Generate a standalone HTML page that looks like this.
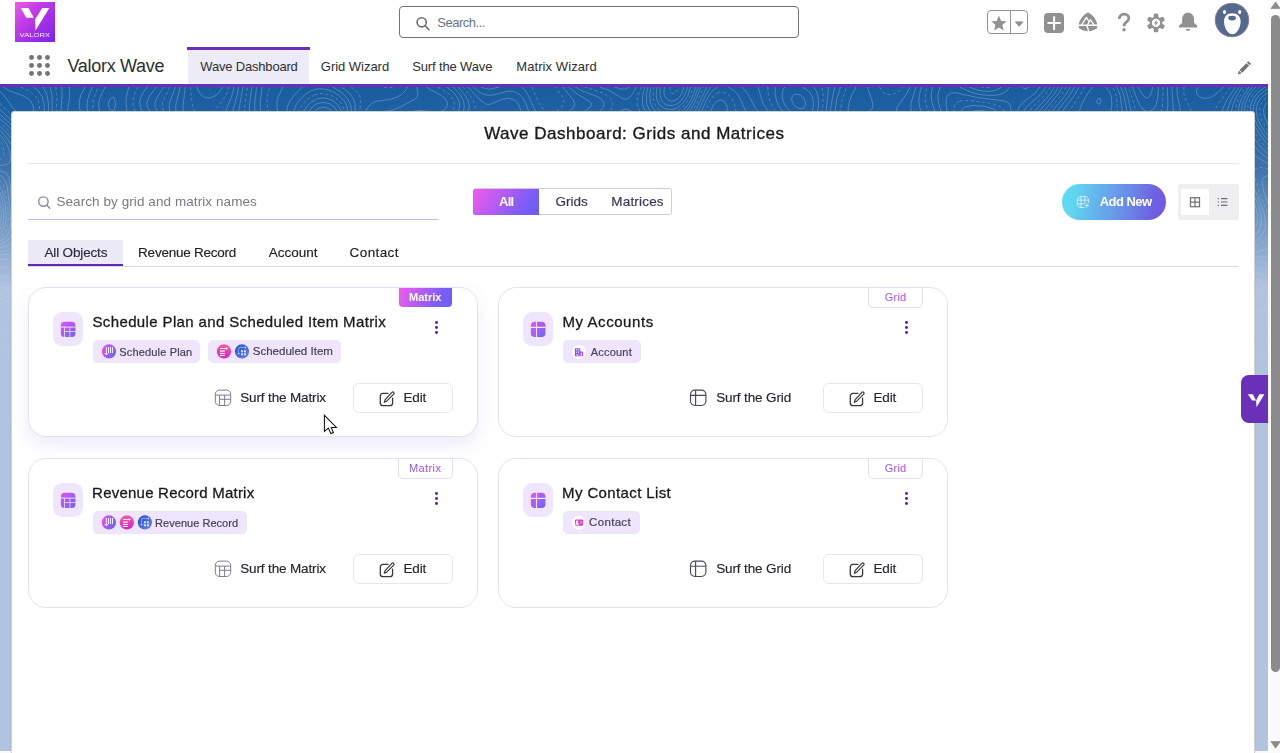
<!DOCTYPE html>
<html>
<head>
<meta charset="utf-8">
<title>Wave Dashboard</title>
<style>
*{box-sizing:border-box;margin:0;padding:0}
html,body{width:1280px;height:753px;overflow:hidden;background:#fff}
body{font-family:"Liberation Sans",sans-serif;color:#181818;position:relative}
.abs{position:absolute}
.t{position:absolute;white-space:nowrap;line-height:1}
/* page background */
#bg{left:0;top:87px;width:1268px;height:664.7px;background:#b0c4df;overflow:hidden}
#bg .grad{left:0;top:0;width:1268px;height:200px;background:linear-gradient(to bottom,#195d9e 0%,#1f62a3 14%,rgba(60,114,172,1) 40%,rgba(176,196,223,0) 100%)}
#bottomstrip{left:0;top:751px;width:1268px;height:2px;background:#fafafa}
/* header */
#hdr{left:0;top:0;width:1268px;height:84px;background:#fff}
#hdrline{left:0;top:84px;width:1268px;height:3px;background:#6a2fb9}
#logo{left:15px;top:2px;width:40px;height:40px;background:linear-gradient(135deg,#f05ce6 0%,#c23de6 35%,#9a2ce8 70%,#7a22e6 100%)}
#gsearch{left:399px;top:6px;width:400px;height:32px;border:1px solid #747474;border-radius:4px;background:#fff}
#fav{left:987px;top:10px;width:41px;height:24px;border:1px solid #939393;border-radius:4px}
#fav i{position:absolute;left:22px;top:0;width:1px;height:22px;background:#939393}
#plus{left:1044px;top:13px;width:20px;height:20px;border-radius:4px;background:#919191}
#avatar{left:1215px;top:3px;width:34px;height:34px;border-radius:50%;background:#54698d;overflow:hidden}
#navtab{left:187.8px;top:47px;width:121.4px;height:37px;background:#eeebf8}
#navtabtop{left:187px;top:47px;width:123px;height:3px;background:#6a2fb9}
/* scrollbar */
#sb{left:1268px;top:0;width:12px;height:753px;background:#fbfbfb}
#sbthumb{left:3px;top:15px;width:9.4px;height:656.5px;border-radius:4.7px;background:#8b8a8d}
/* main card */
#main{left:11.2px;top:110.8px;width:1244.2px;height:660px;background:#fff;border-radius:3px 3px 0 0;border:1px solid #d3d0cd;box-shadow:0 1px 2px rgba(0,0,0,.1)}
.hr1{left:28px;top:163px;width:1211px;height:1px;background:#e8e6f2}
#sline{left:28px;top:219px;width:410px;height:1px;background:#c9b9ef}
#tog{left:472.6px;top:188.4px;width:199px;height:27px;border:1px solid #cfcce2;border-radius:2.5px;background:#fff}
#togall{left:472.9px;top:189px;width:66px;height:26px;border-radius:2.5px 0 0 2.5px;background:linear-gradient(125deg,#f25bee 0%,#b45cf2 40%,#7a5ef5 75%,#6a5cf6 100%)}
#addnew{left:1062px;top:184px;width:104px;height:36px;border-radius:18px;background:linear-gradient(100deg,#5edcf0 0%,#5fd7ef 12%,#64b6ec 32%,#698ee7 60%,#6e62e2 86%,#7056e0 100%)}
#vt{left:1178px;top:184px;width:61px;height:36px;border-radius:3px;background:#efeff1}
#vtw{left:1181px;top:189px;width:28px;height:26px;background:#fff;border-radius:1px}
#otab{left:28px;top:240px;width:95px;height:26px;background:#eceaf7;border-bottom:2px solid #5b2ab8}
#oline{left:28px;top:266px;width:1211px;height:1px;background:#dcdce0}
/* cards */
.card{position:absolute;width:450px;height:150px;border:1px solid #e4e2ee;border-radius:18px;background:#fff}
.card.hov{box-shadow:0 8px 18px rgba(120,100,200,.13)}
.tile{position:absolute;left:24px;top:24px;width:30px;height:34px;border-radius:9px;background:#efe5fd}
.badge{position:absolute;left:369px;top:-1px;width:55px;height:20.8px;border-radius:0 0 5px 5px;border:1px solid #e2dff0;background:#fff}
.badge.fill{left:370px;top:0;width:53px;height:19px;border-radius:0 0 4px 4px;border:0;background:linear-gradient(115deg,#f25bee 0%,#b45cf2 40%,#7a5ef5 75%,#6a5ef7 100%)}
.kebab{position:absolute;left:406.1px;top:33.1px;width:3px;height:14px}
.kebab i{position:absolute;left:0;width:2.9px;height:2.9px;border-radius:50%;background:#5a1fb0}
.chip{position:absolute;top:52px;height:23px;border-radius:5px;background:#efe5fd;border:1px solid #ebe6f4}
.ebtn{position:absolute;left:324px;top:95px;width:100px;height:30px;border:1px solid #e7e6ed;border-radius:6px;background:#fff}
.ci{position:absolute;width:14px;height:14px;border-radius:50%}
#side{left:1241px;top:375px;width:27px;height:48px;border-radius:8px 0 0 8px;background:#6a31b8}
</style>
</head>
<body>
<div id="bg" class="abs"><div class="grad abs"></div><svg id="topo" class="abs" style="left:0;top:0" width="1268" height="300" viewBox="0 0 1268 300"><defs><linearGradient id="tfade" x1="0" y1="0" x2="0" y2="1"><stop offset="0" stop-color="#fff" stop-opacity="1"/><stop offset=".5" stop-color="#fff" stop-opacity=".8"/><stop offset="1" stop-color="#fff" stop-opacity="0"/></linearGradient><mask id="tmask"><rect width="1268" height="300" fill="url(#tfade)"/></mask></defs><g mask="url(#tmask)" fill="none" stroke="#d4e6f8" stroke-opacity=".36" stroke-width=".8" stroke-linejoin="round"><path d="M664.4 0.0L663.8 6.0L665.0 10.0L668.0 13.2L672.0 14.2L676.0 13.0L679.6 10.0L682.1 6.0L683.9 0.0M660.4 0.0L659.8 8.0L661.8 14.0L664.0 16.4L666.0 17.7L670.0 18.8L676.0 17.6L680.9 14.0L684.9 8.0L687.5 0.0M657.1 0.0L656.2 8.0L656.8 12.0L658.3 16.0L660.0 18.3L664.0 21.3L670.0 22.6L674.0 22.1L678.0 20.4L683.1 16.0L686.0 12.0L688.0 8.0L690.5 0.0M480.8 0.0L486.0 1.9L490.0 2.1L499.2 0.0M521.6 0.0L525.4 4.0L528.0 7.8L534.5 22.0L536.9 26.0M566.0 26.8L572.2 22.0L574.6 18.0L574.6 16.0L572.6 12.0L562.6 0.0M651.0 0.0L649.7 8.0L650.4 16.0L653.3 22.0L658.0 26.3M679.9 26.0L684.7 22.0L689.3 16.0L692.3 10.0L695.8 0.0M794.0 7.7L792.0 9.9L791.7 12.0L792.0 14.1L794.0 17.8L796.1 20.0L800.0 21.8L802.0 21.8L804.0 20.7L805.4 18.0L805.6 16.0L804.0 11.4L800.0 7.9L796.0 7.1L794.0 7.7M12.0 287.1L6.0 286.4L0.0 283.7M473.2 0.0L478.0 4.1L482.0 6.6L488.0 8.4L494.0 7.8L508.0 4.2L512.0 4.2L516.0 5.3L520.0 7.9L523.4 12.0L526.0 17.0L529.3 26.0M578.0 26.9L584.5 24.0L590.0 20.4L591.4 18.0L590.9 16.0L589.0 14.0L576.0 6.2L568.6 0.0M647.9 0.0L646.3 8.0L646.5 16.0L648.7 22.0L652.0 26.1M684.0 26.3L688.0 22.0L691.9 16.0L694.7 10.0L698.3 0.0M785.0 0.0L783.5 2.0L782.2 6.0L782.5 12.0L783.9 16.0L786.3 20.0L792.0 26.0M811.3 26.0L812.9 22.0L813.4 18.0L813.2 14.0L812.2 10.0L810.2 6.0L808.4 4.0L802.4 0.0M1098.0 11.8L1096.8 14.0L1096.9 16.0L1098.0 17.2L1100.0 16.7L1101.1 14.0L1100.0 11.5L1098.0 11.8M1254.0 211.3L1258.0 209.0L1261.4 206.0L1262.7 204.0L1263.6 200.0L1262.2 196.0L1260.2 194.0L1254.0 191.3M12.0 280.3L6.0 279.2L0.0 276.6M196.9 0.0L198.4 4.0L202.0 8.9L204.0 10.3L208.0 11.2L212.0 10.4L216.0 8.3L220.0 4.4L222.6 0.0M467.8 0.0L480.0 12.9L486.0 17.2L490.0 17.4L502.0 12.5L506.0 11.5L510.0 11.5L514.0 12.8L516.0 14.2L518.9 18.0L521.5 26.0M594.0 26.9L599.8 24.0L602.1 22.0L603.4 20.0L604.0 18.0L603.8 16.0L602.8 14.0L601.0 12.0L598.0 9.9L582.0 3.8L575.3 0.0M644.7 0.0L642.4 10.0L642.3 16.0L644.1 22.0L646.7 26.0M687.9 26.0L691.0 22.0L694.4 16.0L701.0 0.0M775.5 0.0L775.0 6.0L776.5 14.0L779.5 20.0L784.5 26.0M817.2 26.0L818.6 18.0L818.1 10.0L816.3 4.0L813.5 0.0M1092.7 0.0L1088.0 5.8L1081.4 18.0L1079.5 24.0L1080.0 26.9M1110.6 26.0L1111.9 18.0L1111.4 10.0L1109.0 4.0L1105.2 0.0M1198.4 0.0L1196.8 2.0L1196.2 4.0L1196.5 6.0L1197.7 8.0L1200.0 10.0L1202.0 10.9L1206.0 11.4L1210.0 10.6L1214.0 8.5L1218.0 5.4L1223.3 0.0M1268.0 190.2L1264.9 188.0L1262.0 186.7L1254.0 185.4M1254.0 216.8L1262.0 213.9L1268.0 209.5M1268.0 286.4L1267.2 288.0M12.0 275.2L6.0 274.3L0.0 271.8M185.2 0.0L182.9 20.0L184.0 26.9M225.0 26.0L232.0 8.1L234.0 0.0M458.3 0.0L465.1 8.0L468.3 14.0L469.3 20.0L467.9 26.0M616.0 26.8L622.0 23.2L626.0 22.0L630.0 23.3L634.0 26.3M694.0 26.5L706.9 0.0M636.7 0.0L632.0 7.7L628.0 11.6L626.0 12.4L622.0 11.3L610.0 3.9L599.9 0.0M757.9 0.0L762.8 16.0L766.5 22.0L770.0 26.0M826.0 26.0L828.6 0.0M1079.2 0.0L1074.6 8.0L1064.1 22.0L1061.7 26.0M1122.6 26.0L1120.1 8.0L1116.9 0.0M1177.1 0.0L1177.3 8.0L1180.9 26.0M1221.8 26.0L1223.5 20.0L1226.3 14.0L1235.3 0.0M1268.0 175.8L1262.0 175.0L1254.0 175.7M1254.0 225.3L1262.0 224.5L1268.0 223.1M0.0 188.0L14.0 192.2M12.0 182.2L6.0 179.6L0.0 179.8M1268.0 271.4L1264.0 278.4L1260.0 288.7M12.0 266.8L6.0 266.3L0.0 264.1M180.2 0.0L175.8 18.0L175.7 22.0L176.5 26.0M232.3 26.0L237.1 8.0L238.6 0.0M453.0 0.0L460.0 7.2L463.6 14.0L464.4 20.0L462.6 26.0M697.4 26.0L706.0 7.6L710.8 0.0M629.7 0.0L626.0 1.9L624.0 2.2L620.0 1.8L614.4 0.0M742.0 0.0L747.5 6.0L754.5 20.0L760.0 26.3M830.0 26.6L832.5 10.0L834.7 0.0M1074.6 0.0L1069.8 8.0L1060.3 20.0L1056.0 26.4M1127.3 26.0L1123.8 8.0L1120.8 0.0M1171.9 0.0L1173.5 26.0M1227.0 26.0L1228.4 20.0L1230.7 14.0L1235.0 6.0L1239.1 0.0M1268.0 169.2L1262.0 169.3L1254.0 170.9M1254.0 229.2L1268.0 229.3M0.0 195.2L6.0 197.0L13.3 200.0M12.0 262.9L6.0 262.7L0.0 260.6M1268.0 264.3L1264.4 270.0L1262.0 275.0L1257.5 288.0M12.4 174.0L6.0 172.4L0.0 172.6M175.3 0.0L169.5 16.0L169.0 20.0L170.3 26.0M446.6 0.0L454.0 6.0L458.2 12.0L459.5 16.0L459.6 20.0L457.3 26.0M238.3 26.0L243.0 0.0M728.3 0.0L734.0 3.6L738.1 8.0L740.4 12.0L746.4 26.0M700.8 26.0L706.0 14.0L710.0 6.9L714.0 2.3L717.6 0.0M1070.3 0.0L1065.5 8.0L1055.6 20.0L1051.4 26.0M1231.3 26.0L1232.3 20.0L1234.4 14.0L1237.3 8.0L1242.5 0.0M1167.4 0.0L1167.9 18.0L1167.1 26.0M1132.1 26.0L1130.1 20.0L1126.8 6.0L1124.5 0.0M1268.0 88.7L1264.0 90.2L1262.8 92.0L1262.1 96.0L1263.5 104.0L1268.0 117.0M1268.0 161.6L1253.8 166.0M1254.0 233.4L1260.0 234.8L1268.0 237.5M0.0 199.8L6.0 201.5L12.0 204.2M12.0 259.0L6.0 259.1L0.0 257.2M1268.0 255.6L1264.0 262.6L1260.6 270.0L1254.9 288.0M12.3 168.0L6.0 167.4L0.0 168.1M834.6 26.0L836.9 12.0L840.5 0.0M163.9 0.0L157.3 10.0L154.9 16.0L155.1 20.0L158.1 26.0M14.0 96.0L13.3 108.0L14.0 122.0M12.1 156.0L8.3 158.0L0.0 160.8M426.4 0.0L430.0 2.5L440.7 8.0L445.5 12.0L447.4 16.0L447.5 18.0L446.0 21.3L444.0 23.0L440.0 24.6L434.0 24.8L420.0 23.3L414.0 24.2L408.0 26.7M249.3 26.0L249.5 18.0L251.8 0.0M867.4 0.0L872.1 14.0L872.9 18.0L872.7 20.0L871.7 22.0L869.8 24.0L866.0 26.6M848.3 26.0L848.2 20.0L849.6 14.0L852.0 7.8L856.0 0.0M1062.5 0.0L1057.4 8.0L1042.0 26.5M1253.5 100.0L1259.1 112.0L1262.2 120.0L1264.5 128.0L1265.5 136.0L1264.9 142.0L1263.3 146.0L1260.0 150.4L1254.0 155.2M1253.5 244.0L1256.4 248.0L1257.3 254.0L1256.6 260.0L1253.3 274.0M1158.5 0.0L1157.6 12.0L1156.0 18.3L1154.0 21.6L1152.0 23.4L1148.0 24.5L1144.0 23.0L1140.0 18.7L1138.0 14.8L1132.4 0.0M717.1 14.0L720.0 13.0L722.0 13.3L724.0 14.5L726.0 17.1L727.1 20.0L727.7 26.0M709.9 26.0L713.3 18.0L717.1 14.0M1268.0 76.7L1260.2 72.0L1254.0 67.3M1238.2 26.0L1239.3 18.0L1241.4 12.0L1244.6 6.0L1249.0 0.0M0.0 78.6L6.0 77.6L9.0 76.0L10.2 74.0L10.7 70.0L9.5 64.0L7.1 58.0L3.4 52.0L0.0 47.7M0.0 207.6L7.6 210.0L13.9 214.0M13.8 250.0L8.0 251.8L4.0 251.5L0.0 250.1M896.9 26.0L896.3 24.0L897.1 20.0L906.0 7.8L910.2 0.0M69.2 0.0L69.7 10.0L67.2 26.0M13.0 60.0L6.0 50.0L0.0 43.3M156.3 0.0L150.0 8.0L147.2 14.0L147.1 18.0L147.6 20.0L149.7 24.0L152.0 26.8M80.7 26.0L79.3 20.0L79.4 14.0L80.9 8.0L85.1 0.0M416.5 0.0L417.7 4.0L417.9 8.0L417.0 10.0L414.9 12.0L402.0 19.1L394.0 22.6L390.0 23.6L378.0 25.2L374.0 26.7M255.0 26.0L254.7 16.0L256.6 0.0M1058.6 0.0L1053.5 8.0L1037.7 26.0M1152.7 0.0L1151.9 4.0L1150.0 9.0L1148.0 10.8L1146.0 10.9L1144.0 9.6L1142.0 7.0L1137.8 0.0M1268.0 71.8L1260.9 66.0L1253.7 58.0M1241.3 26.0L1242.2 18.0L1244.3 12.0L1247.6 6.0L1252.4 0.0M0.0 83.5L6.0 86.3L8.0 88.7L9.4 92.0L10.3 98.0L13.1 138.0L12.4 146.0L10.8 150.0L6.9 154.0L0.0 157.5M1253.9 108.0L1257.6 116.0L1259.7 122.0L1261.0 128.0L1261.4 134.0L1260.9 138.0L1259.6 142.0L1257.2 146.0L1253.4 150.0M0.0 211.6L6.0 213.3L10.0 215.5L13.0 218.0M12.3 246.0L10.0 247.1L6.0 247.7L0.0 246.1M912.3 26.0L910.9 22.0L911.0 16.0L916.0 0.0M61.7 0.0L62.1 8.0L60.8 26.0M13.5 54.0L6.7 46.0L0.0 39.3M147.1 0.0L141.7 8.0L139.7 14.0L140.2 20.0L142.2 24.0L144.0 26.2M88.0 26.0L87.0 20.0L87.4 14.0L88.9 8.0L92.5 0.0M407.1 0.0L406.0 2.7L404.0 5.3L400.8 8.0L397.2 10.0L390.0 12.4L376.0 14.3L372.0 16.1L368.0 20.1L364.7 26.0M261.4 26.0L260.5 22.0L260.2 16.0L262.2 0.0M1054.6 0.0L1049.4 8.0L1032.8 26.0M1268.0 67.1L1260.8 60.0L1253.1 50.0M1244.3 26.0L1245.1 18.0L1247.1 12.0L1250.6 6.0L1255.9 0.0M0.0 88.2L4.2 92.0L6.0 95.4L7.3 100.0L9.8 120.0L10.7 134.0L10.3 140.0L8.6 146.0L5.8 150.0L0.0 154.1M1253.6 114.0L1257.0 124.0L1257.8 132.0L1256.6 138.0L1253.2 144.0M0.0 216.2L4.0 217.0L8.0 219.1L11.2 222.0L13.7 226.0M13.4 238.0L12.0 240.0L8.0 242.6L4.0 242.8L0.0 241.3M922.0 26.0L919.6 20.0L918.8 14.0L919.3 8.0L921.3 0.0M49.8 0.0L51.1 4.0L52.1 10.0L52.2 26.0M13.3 44.0L0.0 31.5M128.8 0.0L126.7 8.0L126.0 14.0L126.5 22.0L128.0 26.7M100.1 26.0L98.7 20.0L99.1 14.0L101.9 6.0L105.4 0.0M341.6 0.0L349.2 6.0L353.5 12.0L355.1 18.0L355.2 26.0M278.1 26.0L277.0 20.0L277.1 14.0L278.1 10.0L282.8 0.0M969.3 0.0L978.0 3.3L988.0 4.5L996.0 3.3L1001.6 0.0M1045.7 0.0L1043.2 4.0L1040.0 7.7L1026.5 20.0L1022.0 26.6M936.0 26.7L932.7 18.0L931.3 12.0L931.3 6.0L932.7 0.0M1268.0 58.0L1259.9 48.0L1253.8 38.0M1250.2 26.0L1250.7 18.0L1253.0 12.0L1258.0 5.3L1265.1 0.0M0.0 98.6L2.4 104.0L4.0 110.0L5.5 120.0L6.1 128.0L5.8 134.0L4.5 140.0L2.3 144.0L0.0 146.7M42.7 0.0L45.4 4.0L47.4 10.0L48.5 18.0L48.4 26.0M13.8 40.0L0.0 27.3M332.6 0.0L342.0 5.7L347.9 12.0L350.6 18.0L351.6 26.0M286.5 26.0L287.4 20.0L289.9 14.0L294.4 8.0L302.2 0.0M959.5 0.0L967.9 4.0L974.0 6.1L982.0 7.8L990.0 8.4L996.0 8.2L1002.0 6.8L1006.8 4.0L1009.8 0.0M1039.9 0.0L1035.1 6.0L1022.0 16.3L1019.1 20.0L1016.7 26.0M941.6 26.0L938.6 16.0L937.8 10.0L938.7 4.0L940.8 0.0M110.2 12.0L112.0 10.4L114.0 10.8L115.1 14.0L115.4 18.0L114.6 22.0L114.0 23.1L112.0 23.8L109.6 22.0L108.2 18.0L108.4 16.0L110.2 12.0M1268.0 53.5L1262.0 45.7L1257.2 38.0L1254.0 30.1L1253.1 24.0L1253.7 18.0L1256.2 12.0L1261.5 6.0L1268.0 1.9M0.0 105.2L2.8 116.0L3.8 128.0L2.8 136.0L0.0 142.1M33.3 0.0L38.5 4.0L42.3 10.0L44.2 18.0L44.3 26.0M12.4 34.0L0.0 22.5M316.5 2.0L322.0 1.8L328.0 2.9L334.0 5.3L338.3 8.0L342.7 12.0L345.5 16.0L347.1 20.0L348.3 26.0M293.0 26.0L296.0 18.0L298.7 14.0L302.0 10.3L306.0 6.8L310.0 4.2L316.5 2.0M1028.8 0.0L1026.0 1.6L1024.0 1.8L1022.2 0.0M951.1 6.0L956.0 5.8L978.0 10.7L1000.0 13.3L1006.0 14.5L1008.5 16.0L1009.9 18.0L1010.8 22.0L1011.0 26.0M947.5 26.0L946.1 18.0L946.2 12.0L948.0 8.0L951.1 6.0M1268.0 48.8L1263.1 42.0L1259.6 36.0L1257.2 30.0L1256.2 24.0L1257.0 18.0L1258.6 14.0L1262.0 9.7L1268.0 5.6M0.0 114.2L1.4 126.0L0.9 132.0L0.0 135.7M2.9 0.0L8.0 3.2L22.0 8.3L28.5 12.0L30.5 14.0L32.8 18.0L33.7 22.0L33.2 26.0M18.0 26.5L12.3 20.0L4.0 8.5L0.0 4.3M316.9 12.0L320.0 11.2L324.0 11.0L328.0 11.6L332.0 13.2L335.9 16.0L338.0 18.3L340.2 22.0L341.6 26.0M303.0 26.0L305.1 22.0L308.1 18.0L312.0 14.5L316.9 12.0M965.2 20.0L972.0 18.5L984.0 19.2L993.6 22.0L996.7 24.0L998.7 26.0M960.3 26.0L962.0 22.6L965.2 20.0M1268.0 37.7L1264.5 30.0L1263.5 24.0L1264.0 20.8L1265.1 18.0L1268.0 14.5M319.1 16.0L324.0 15.4L330.0 16.9L334.2 20.0L336.0 22.2L338.0 26.2M307.8 26.0L312.3 20.0L316.0 17.3L319.1 16.0M973.4 24.0L978.0 23.4L982.0 23.6L986.0 24.4L990.0 26.0M969.4 26.0L973.4 24.0M317.4 22.0L322.0 20.3L326.0 20.5L330.0 22.3L333.4 26.0M313.1 26.0L317.4 22.0"/><path stroke-dasharray="3 2.6" d="M670.6 0.0L670.0 2.0L670.2 4.0L672.0 6.4L674.0 6.5L676.8 4.0L678.0 0.0M532.0 0.0L538.0 14.3L542.0 20.9L546.0 24.1L548.0 24.8L552.0 25.2L556.0 24.3L560.1 22.0L562.1 20.0L563.8 16.0L563.8 14.0L562.5 10.0L555.7 0.0M654.0 0.0L653.0 10.0L653.6 14.0L655.1 18.0L658.0 21.7L661.2 24.0L666.0 25.8L670.0 26.1L674.0 25.4L678.0 23.8L684.0 19.1L687.7 14.0L689.8 10.0L693.2 0.0M190.5 0.0L192.0 15.3L193.5 22.0L195.0 26.0M213.3 26.0L224.0 11.3L226.9 6.0L228.9 0.0M463.0 0.0L469.8 8.0L473.5 14.0L475.2 20.0L474.8 24.0L474.0 26.1M606.0 26.7L609.7 24.0L612.5 20.0L612.9 16.0L610.8 12.0L606.3 8.0L602.8 6.0L584.6 0.0M641.1 0.0L637.8 10.0L636.9 16.0L638.5 22.0L642.0 27.0M691.2 26.0L696.0 17.8L703.7 0.0M767.7 0.0L768.3 8.0L769.9 14.0L772.9 20.0L778.0 26.3M821.8 26.0L822.8 20.0L823.1 12.0L822.9 6.0L821.8 0.0M1084.7 0.0L1078.8 10.0L1070.6 22.0L1068.7 26.0M1117.5 26.0L1116.5 10.0L1114.6 4.0L1112.3 0.0M1184.1 0.0L1183.6 4.0L1184.1 8.0L1186.0 13.1L1190.6 22.0L1191.8 26.0M1213.3 26.0L1217.4 18.0L1230.6 0.0M1268.0 182.4L1262.0 180.6L1254.0 180.4M1254.0 221.2L1262.0 219.5L1268.0 217.0M1268.0 278.6L1263.4 288.0M12.0 270.8L6.0 270.1L0.0 267.8M170.0 0.0L163.9 12.0L162.5 16.0L162.3 20.0L164.3 26.0M12.0 162.3L0.0 164.3M437.7 0.0L447.7 6.0L450.0 8.1L452.9 12.0L454.4 16.0L454.3 20.0L452.6 24.0L450.0 26.8M243.8 26.0L247.3 0.0M879.7 0.0L882.0 4.0L884.0 5.9L886.0 7.1L890.0 7.9L896.0 6.2L900.0 3.2L902.8 0.0M1066.3 0.0L1061.4 8.0L1046.8 26.0M1234.9 26.0L1236.3 18.0L1238.4 12.0L1241.6 6.0L1245.8 0.0M1163.1 0.0L1162.5 18.0L1161.7 22.0L1160.0 26.5M1138.0 26.4L1134.6 20.0L1130.6 6.0L1128.2 0.0M717.5 6.0L720.0 5.2L724.0 5.4L728.0 7.4L730.0 9.2L732.2 12.0L734.1 16.0L736.4 26.0M704.7 26.0L710.0 13.7L714.0 8.4L717.5 6.0M0.0 72.8L2.8 70.0L3.7 68.0L4.1 64.0L2.6 58.0L0.0 53.2M1268.0 82.1L1262.0 80.5L1258.0 80.4L1255.4 82.0L1254.4 86.0L1254.8 90.0L1256.4 96.0L1268.0 127.6M1268.0 151.3L1262.4 156.0L1254.0 160.7M1253.5 238.0L1257.6 240.0L1260.0 242.0L1262.5 246.0L1263.0 250.0L1261.9 256.0L1256.7 272.0L1253.4 284.0M0.0 203.8L6.0 205.5L12.0 208.4M12.0 255.1L6.0 255.5L0.0 253.7M839.8 26.0L842.0 13.4L846.7 0.0M55.8 0.0L56.8 10.0L56.2 26.0M12.7 48.0L0.0 35.4M138.0 0.0L134.2 8.0L132.9 14.0L133.3 20.0L136.0 26.0M94.0 26.5L92.7 20.0L93.2 14.0L94.8 8.0L98.5 0.0M351.2 0.0L356.4 4.0L358.2 6.0L360.2 10.0L360.8 16.0L359.3 26.0M269.0 26.0L267.4 20.0L267.0 14.0L267.7 8.0L269.6 0.0M392.8 0.0L388.0 1.0L381.8 0.0M981.1 0.0L986.0 0.5L990.3 0.0M1050.4 0.0L1048.1 4.0L1044.9 8.0L1032.6 20.0L1027.7 26.0M929.4 26.0L926.8 20.0L925.3 14.0L925.2 8.0L926.7 0.0M1268.0 62.5L1260.4 54.0L1253.4 44.0M1247.3 26.0L1247.9 18.0L1250.0 12.0L1254.0 5.7L1260.0 0.0M0.0 93.1L3.3 98.0L5.7 106.0L7.7 120.0L8.4 132.0L7.9 138.0L6.0 143.9L3.1 148.0L0.0 150.6M1253.3 122.0L1254.2 130.0L1253.1 136.0M0.0 223.2L2.0 223.0L4.0 223.6L6.0 224.9L8.0 227.5L8.8 230.0L8.0 234.0L6.0 235.7L3.7 236.0L0.0 234.2M20.8 0.0L30.0 4.7L34.0 7.8L36.0 10.0L38.2 14.0L39.4 18.0L39.7 26.0M13.9 30.0L0.0 16.4M314.5 8.0L320.0 6.6L324.0 6.6L330.0 8.0L334.0 9.8L338.0 12.7L341.0 16.0L343.3 20.0L345.0 26.0M298.3 26.0L300.9 20.0L304.0 15.7L308.0 11.8L314.5 8.0M959.7 14.0L964.0 13.4L972.0 13.8L986.0 15.5L994.0 17.1L1000.7 20.0L1002.9 22.0L1005.1 26.0M953.5 26.0L953.7 22.0L954.8 18.0L956.2 16.0L959.7 14.0M1268.0 43.7L1262.0 33.6L1260.1 28.0L1259.6 24.0L1260.0 20.0L1261.5 16.0L1264.0 12.6L1268.0 9.5M322.0 26.6L326.0 26.9"/></g></svg></div>
<div id="bottomstrip" class="abs"></div>
<div id="hdr" class="abs"></div>
<div id="hdrline" class="abs"></div>
<div id="navtab" class="abs"></div><div id="navtabtop" class="abs"></div>
<div id="logo" class="abs"></div>
<div id="gsearch" class="abs"></div>
<div id="fav" class="abs"><i></i></div>
<div id="plus" class="abs"></div>
<div id="avatar" class="abs"></div>
<div id="main" class="abs"></div>
<div class="hr1 abs"></div>
<div id="sline" class="abs"></div>
<div id="tog" class="abs"></div><div id="togall" class="abs"></div>
<div id="addnew" class="abs"></div>
<div id="vt" class="abs"></div><div id="vtw" class="abs"></div>
<div id="otab" class="abs"></div><div id="oline" class="abs"></div>
<!--CARDS-->
<div class="card hov" style="left:28px;top:287px">
 <div class="tile"></div>
 <div class="badge fill"></div>
 <div class="kebab"><i style="top:0"></i><i style="top:5px"></i><i style="top:10px"></i></div>
 <div class="chip" style="left:64px;width:107px"></div>
 <div class="chip" style="left:179px;width:133px"></div>
 <div class="ebtn"></div>
</div>
<div class="card" style="left:498px;top:287px">
 <div class="tile"></div>
 <div class="badge"></div>
 <div class="kebab"><i style="top:0"></i><i style="top:5px"></i><i style="top:10px"></i></div>
 <div class="chip" style="left:64px;width:78px"></div>
 <div class="ebtn"></div>
</div>
<div class="card" style="left:28px;top:458px">
 <div class="tile"></div>
 <div class="badge"></div>
 <div class="kebab"><i style="top:0"></i><i style="top:5px"></i><i style="top:10px"></i></div>
 <div class="chip" style="left:64px;width:154px"></div>
 <div class="ebtn"></div>
</div>
<div class="card" style="left:498px;top:458px">
 <div class="tile"></div>
 <div class="badge"></div>
 <div class="kebab"><i style="top:0"></i><i style="top:5px"></i><i style="top:10px"></i></div>
 <div class="chip" style="left:64px;width:77px"></div>
 <div class="ebtn"></div>
</div>
<!--TEXT-START-->
<div class="t" style="left:437.30px;top:16.00px;font-size:13px;font-weight:400;letter-spacing:-0.488px;color:#6b7382">Search...</div>
<div class="t" style="left:67.50px;top:56.76px;font-size:18px;font-weight:400;letter-spacing:-0.300px;color:#2e2e2e">Valorx Wave</div>
<div class="t" style="left:200.30px;top:60.00px;font-size:13px;font-weight:400;letter-spacing:-0.185px;color:#2e2e2e">Wave Dashboard</div>
<div class="t" style="left:320.80px;top:60.00px;font-size:13px;font-weight:400;letter-spacing:-0.030px;color:#2e2e2e">Grid Wizard</div>
<div class="t" style="left:412.20px;top:60.00px;font-size:13px;font-weight:400;letter-spacing:-0.142px;color:#2e2e2e">Surf the Wave</div>
<div class="t" style="left:516.30px;top:60.00px;font-size:13px;font-weight:400;letter-spacing:0.075px;color:#2e2e2e">Matrix Wizard</div>
<div id="gl" style="position:absolute;left:0;top:0;width:1268px;height:753px;will-change:transform">
<div class="t" style="left:484.20px;top:124.61px;font-size:17px;font-weight:400;letter-spacing:0.515px;-webkit-text-stroke:.35px #1a1a1a;color:#1a1a1a">Wave Dashboard: Grids and Matrices</div>
<div class="t" style="left:56.40px;top:194.57px;font-size:13.5px;font-weight:400;letter-spacing:0.077px;color:#7a7a80">Search by grid and matrix names</div>
<div class="t" style="left:499.00px;top:195.00px;font-size:13px;font-weight:700;letter-spacing:-0.750px;color:#ffffff">All</div>
<div class="t" style="left:555.50px;top:194.57px;font-size:13.5px;font-weight:400;letter-spacing:0.000px;-webkit-text-stroke:.2px #3a3955;color:#3a3955">Grids</div>
<div class="t" style="left:611.30px;top:194.57px;font-size:13.5px;font-weight:400;letter-spacing:0.186px;-webkit-text-stroke:.2px #3a3955;color:#3a3955">Matrices</div>
<div class="t" style="left:1099.70px;top:195.00px;font-size:13px;font-weight:700;letter-spacing:-0.533px;color:#ffffff">Add New</div>
<div class="t" style="left:44.50px;top:245.57px;font-size:13.5px;font-weight:400;letter-spacing:-0.160px;-webkit-text-stroke:.15px #2a2940;color:#2a2940">All Objects</div>
<div class="t" style="left:138.10px;top:245.57px;font-size:13.5px;font-weight:400;letter-spacing:-0.238px;-webkit-text-stroke:.15px #222;color:#222">Revenue Record</div>
<div class="t" style="left:268.80px;top:245.57px;font-size:13.5px;font-weight:400;letter-spacing:0.000px;-webkit-text-stroke:.15px #222;color:#222">Account</div>
<div class="t" style="left:349.60px;top:245.57px;font-size:13.5px;font-weight:400;letter-spacing:0.400px;-webkit-text-stroke:.15px #222;color:#222">Contact</div>
<div class="t" style="left:92.50px;top:314.30px;font-size:15px;font-weight:400;letter-spacing:0.366px;-webkit-text-stroke:.3px #1a1a1a;color:#1a1a1a">Schedule Plan and Scheduled Item Matrix</div>
<div class="t" style="left:119.30px;top:346.69px;font-size:11px;font-weight:400;letter-spacing:0.158px;-webkit-text-stroke:.2px #433f59;color:#433f59">Schedule Plan</div>
<div class="t" style="left:252.70px;top:346.27px;font-size:11.5px;font-weight:400;letter-spacing:0.023px;-webkit-text-stroke:.2px #433f59;color:#433f59">Scheduled Item</div>
<div class="t" style="left:409.00px;top:291.69px;font-size:11px;font-weight:700;letter-spacing:-0.020px;color:#ffffff">Matrix</div>
<div class="t" style="left:240.20px;top:390.97px;font-size:13.5px;font-weight:400;letter-spacing:-0.136px;-webkit-text-stroke:.15px #26252e;color:#26252e">Surf the Matrix</div>
<div class="t" style="left:403.60px;top:390.97px;font-size:13.5px;font-weight:400;letter-spacing:-0.233px;-webkit-text-stroke:.15px #26252e;color:#26252e">Edit</div>
<div class="t" style="left:562.50px;top:314.30px;font-size:15px;font-weight:400;letter-spacing:0.560px;-webkit-text-stroke:.3px #1a1a1a;color:#1a1a1a">My Accounts</div>
<div class="t" style="left:590.70px;top:346.69px;font-size:11px;font-weight:400;letter-spacing:0.217px;-webkit-text-stroke:.2px #433f59;color:#433f59">Account</div>
<div class="t" style="left:884.80px;top:291.69px;font-size:11px;font-weight:400;letter-spacing:0.200px;background:linear-gradient(90deg,#7f5cf7,#c336e2);-webkit-background-clip:text;background-clip:text;-webkit-text-fill-color:transparent;color:#a457f0">Grid</div>
<div class="t" style="left:716.20px;top:390.97px;font-size:13.5px;font-weight:400;letter-spacing:-0.125px;-webkit-text-stroke:.15px #26252e;color:#26252e">Surf the Grid</div>
<div class="t" style="left:873.60px;top:390.97px;font-size:13.5px;font-weight:400;letter-spacing:-0.233px;-webkit-text-stroke:.15px #26252e;color:#26252e">Edit</div>
<div class="t" style="left:92.10px;top:485.30px;font-size:15px;font-weight:400;letter-spacing:0.225px;-webkit-text-stroke:.3px #1a1a1a;color:#1a1a1a">Revenue Record Matrix</div>
<div class="t" style="left:155.10px;top:517.69px;font-size:11px;font-weight:400;letter-spacing:0.031px;-webkit-text-stroke:.2px #433f59;color:#433f59">Revenue Record</div>
<div class="t" style="left:409.00px;top:462.69px;font-size:11px;font-weight:400;letter-spacing:0.400px;background:linear-gradient(90deg,#7f5cf7,#c336e2);-webkit-background-clip:text;background-clip:text;-webkit-text-fill-color:transparent;color:#a457f0">Matrix</div>
<div class="t" style="left:240.20px;top:561.97px;font-size:13.5px;font-weight:400;letter-spacing:-0.136px;-webkit-text-stroke:.15px #26252e;color:#26252e">Surf the Matrix</div>
<div class="t" style="left:403.60px;top:561.97px;font-size:13.5px;font-weight:400;letter-spacing:-0.233px;-webkit-text-stroke:.15px #26252e;color:#26252e">Edit</div>
<div class="t" style="left:562.10px;top:485.30px;font-size:15px;font-weight:400;letter-spacing:0.379px;-webkit-text-stroke:.3px #1a1a1a;color:#1a1a1a">My Contact List</div>
<div class="t" style="left:589.10px;top:517.27px;font-size:11.5px;font-weight:400;letter-spacing:0.317px;-webkit-text-stroke:.2px #433f59;color:#433f59">Contact</div>
<div class="t" style="left:884.80px;top:462.69px;font-size:11px;font-weight:400;letter-spacing:0.200px;background:linear-gradient(90deg,#7f5cf7,#c336e2);-webkit-background-clip:text;background-clip:text;-webkit-text-fill-color:transparent;color:#a457f0">Grid</div>
<div class="t" style="left:716.20px;top:561.97px;font-size:13.5px;font-weight:400;letter-spacing:-0.125px;-webkit-text-stroke:.15px #26252e;color:#26252e">Surf the Grid</div>
<div class="t" style="left:873.60px;top:561.97px;font-size:13.5px;font-weight:400;letter-spacing:-0.233px;-webkit-text-stroke:.15px #26252e;color:#26252e">Edit</div>
</div>
<!--TEXT-END-->
<svg id="ico" class="abs" style="left:0;top:0" width="1280" height="753" viewBox="0 0 1280 753">
<defs>
 <linearGradient id="gpv" x1="0" y1="0" x2="1" y2="1"><stop offset="0" stop-color="#e653f0"/><stop offset="1" stop-color="#6566fb"/></linearGradient>
 <linearGradient id="gpv2" x1="0" y1="0.3" x2="1" y2="0.7"><stop offset="0" stop-color="#e44cf0"/><stop offset="1" stop-color="#6663fb"/></linearGradient>
 <linearGradient id="gpink" x1="0" y1="0" x2="0" y2="1"><stop offset="0" stop-color="#f2589a"/><stop offset="1" stop-color="#d726cc"/></linearGradient>
 <linearGradient id="gblue" x1="0" y1="0" x2="1" y2="1"><stop offset="0" stop-color="#1a4fbd"/><stop offset="1" stop-color="#6f80f2"/></linearGradient>
</defs>
<!-- logo glyph -->
<g transform="translate(15,2)" fill="#fff">
 <path d="M5.8 5.9 H13.5 L18.8 15.7 H11.3 Z"/>
 <path d="M27.2 5.9 H34.3 L20.5 28.6 L20.1 17.4 Z"/>
 <text x="4.6" y="34.9" font-family="Liberation Sans, sans-serif" font-weight="400" font-size="4.9" fill-opacity=".92" textLength="30.6" lengthAdjust="spacingAndGlyphs">VALORX</text>
</g>
<!-- app launcher -->
<g fill="#747474">
 <circle cx="31.5" cy="57.5" r="2.45"/><circle cx="39.5" cy="57.5" r="2.45"/><circle cx="47.5" cy="57.5" r="2.45"/>
 <circle cx="31.5" cy="65.5" r="2.45"/><circle cx="39.5" cy="65.5" r="2.45"/><circle cx="47.5" cy="65.5" r="2.45"/>
 <circle cx="31.5" cy="73.5" r="2.45"/><circle cx="39.5" cy="73.5" r="2.45"/><circle cx="47.5" cy="73.5" r="2.45"/>
</g>
<!-- global search icon -->
<g fill="none" stroke="#706e6b" stroke-width="1.6" stroke-linecap="round"><circle cx="421.7" cy="22.3" r="4.6"/><path d="M425.2 25.9 L429 29.7"/></g>
<!-- star -->
<path fill="#919191" d="M998.9 15.4 L1001.1 20.9 L1006.6 21.3 L1002.3 24.9 L1003.7 30.6 L998.9 27.5 L994.1 30.6 L995.5 24.9 L991.2 21.3 L996.7 20.9 Z"/>
<!-- caret -->
<path fill="#919191" stroke="#919191" stroke-width="1" stroke-linejoin="round" d="M1015.4 21.9 H1022.8 L1019.1 26.3 Z"/>
<!-- plus -->
<path stroke="#fff" stroke-width="2" stroke-linecap="round" d="M1048.2 23.1 H1060 M1054.1 17 V29.3"/>
<!-- trailhead -->
<g fill="#919191">
 <path d="M1088 12.6 C1083.5 14.5 1079.6 19.5 1078.7 24.6 H1097.2 C1096.4 19.5 1092.5 14.5 1088 12.6 Z"/>
 <path d="M1078.7 26 H1097.3 C1097.3 27 1097.1 28 1096.8 28.6 C1094 30.2 1091 31.2 1088 31.5 C1085 31.2 1082 30.2 1079.2 28.6 C1078.9 28 1078.7 27 1078.7 26 Z"/>
</g>
<g fill="none" stroke="#fff" stroke-width="1.3" stroke-linejoin="round" stroke-linecap="round">
 <path d="M1081.6 24.8 L1086.4 17.4 L1089.3 22 M1087.6 24.6 L1090.5 19.8 L1094 24.8"/>
 <path d="M1086.6 26 C1087.6 27.5 1088.6 28.5 1088.3 31.6"/>
</g>
<!-- question -->
<g fill="none" stroke="#919191" stroke-width="2.7"><path d="M1119.4 19 C1119.2 15.8 1121.4 14.2 1124.2 14.2 C1127 14.2 1128.8 16 1128.8 18.2 C1128.8 20.4 1127.4 21.4 1125.8 22.6 C1124.5 23.6 1124 24.4 1124 26.3"/></g>
<circle cx="1124" cy="29.7" r="1.75" fill="#919191"/>
<!-- gear -->
<g transform="translate(1156,22.9)" fill="#919191">
 <circle r="6.3"/>
 <g id="tooth"><rect x="-2.35" y="-9.3" width="4.7" height="5.6" rx="1.5"/></g>
 <use href="#tooth" transform="rotate(60)"/><use href="#tooth" transform="rotate(120)"/><use href="#tooth" transform="rotate(180)"/><use href="#tooth" transform="rotate(240)"/><use href="#tooth" transform="rotate(300)"/>
 <circle r="4.2" fill="#fff"/>
 <path d="M1.1 -3.3 L-2.2 0.7 H-0.3 L-1.2 3.4 L2.3 -0.7 H0.3 Z" fill="#919191"/>
</g>
<!-- bell -->
<g fill="#919191">
 <path d="M1182.1 25 V19 C1182.1 15.2 1184.8 12.7 1188.1 12.7 C1191.4 12.7 1194.1 15.2 1194.1 19 V25 Z"/>
 <path d="M1179 27.6 V25.5 L1182.1 23 H1194.1 L1197.1 25.5 V27.6 Z"/>
 <path d="M1185.7 29.1 H1190.3 C1190.1 30.3 1189.2 31 1188 31 C1186.8 31 1185.9 30.3 1185.7 29.1 Z"/>
</g>
<!-- avatar -->
<g>
 <circle cx="1232" cy="20" r="16.8" fill="#55698e" stroke="#9b90a0" stroke-width="0.8"/>
 <ellipse cx="1224.5" cy="12.1" rx="1.6" ry="2.1" fill="#fff"/><ellipse cx="1239.7" cy="12.1" rx="1.6" ry="2.1" fill="#fff"/>
 <path fill="#fff" d="M1232.3 13.3 C1237.5 13.3 1240.6 16.5 1240.6 21.5 C1240.6 27.5 1236.8 34.3 1232.3 34.3 C1227.8 34.3 1224 27.5 1224 21.5 C1224 16.5 1227.1 13.3 1232.3 13.3 Z"/>
 <ellipse cx="1232.1" cy="18.1" rx="3.9" ry="2.4" fill="#55698e"/>
</g>
<!-- nav pencil -->
<g fill="#747474" transform="translate(1243.6,68.6) rotate(45)">
 <rect x="-1.9" y="-8.6" width="3.8" height="2" /><rect x="-1.9" y="-5.8" width="3.8" height="9.6"/><path d="M-1.9 4.6 H1.9 L0 8.2 Z"/>
</g>
<!--MAINICONS-START-->
<defs><linearGradient id="gacct" x1="0" y1="0" x2="1" y2="1"><stop offset="0" stop-color="#6458f8"/><stop offset="1" stop-color="#c552f0"/></linearGradient><linearGradient id="gcont" x1="0" y1="0" x2="1" y2="1"><stop offset="0" stop-color="#f2389a"/><stop offset="1" stop-color="#de2ed6"/></linearGradient></defs>
<g fill="none" stroke="#8d86ae" stroke-width="1.4" stroke-linecap="round"><circle cx="43.4" cy="201.6" r="4.7"/><path d="M46.9 205.2 L49.9 208.2"/></g>
<g fill="none" stroke="#fff" stroke-opacity=".8" stroke-width="0.85" stroke-linecap="round"><path d="M1084.3 207.5 H1081.4 C1078.8 207.5 1077.2 205.6 1077.2 203 V200.9 C1077.2 198.3 1078.8 196.4 1081.4 196.4 H1084.4 C1087 196.4 1088.6 198.3 1088.6 200.9 V202.4"/><path d="M1077.4 200.1 H1088.4 M1077.4 203.8 H1084 M1081 196.5 V207.4 M1084.8 196.5 V203"/><path d="M1086.9 203.6 V207.2 M1085.1 205.4 H1088.7"/></g>
<g fill="none" stroke="#777" stroke-width="1.3"><rect x="1190.5" y="197.7" width="9" height="9"/><path d="M1195 197.7 V206.7 M1190.5 202.2 H1199.5"/></g>
<g stroke="#6e6e6e" stroke-width="1.2"><path d="M1221 198.6 H1227.4 M1221 202 H1227.4 M1221 205.4 H1227.4"/><path d="M1217.7 198.6 H1219 M1217.7 202 H1219 M1217.7 205.4 H1219"/></g>
<g transform="translate(60.9,321.8)"><rect width="14.5" height="15.2" rx="3.6" fill="url(#gpv)"/><g stroke="#efe5fd" stroke-opacity=".8" fill="none"><path d="M0 5.3 H14.5" stroke-width="1.2"/><path d="M3.6 5.3 V15.2 M9 5.3 V15.2 M3.6 9.7 H14.5" stroke-width="1"/></g></g>
<g transform="translate(109,351.4)"><circle r="7.1" fill="url(#gpv2)"/><g stroke="#fff" stroke-width="0.95" stroke-linecap="round" fill="none"><path d="M-2.6 -4 V3 M-0.5 -4 V1.3 M1.5 -4 V1.3 M3.6 -4 V1.3"/><path d="M-4.2 1.8 L-2.6 3.4 L-1 1.8" stroke-width="0.9"/></g></g>
<g transform="translate(224,351.4)"><circle r="7.1" fill="url(#gpink)"/><g stroke="#fff" fill="none" stroke-linecap="butt"><path d="M-4 -2.9 H2.8" stroke-width="1"/><path d="M-4 -0.3 H0.8" stroke-width="1.5" stroke-opacity=".8"/><path d="M-4 2 H0.8 M-4 4 H0.8" stroke-width="1"/></g><path fill="#fff" d="M2.6 -4.6 L3.1 -3.4 L4.3 -2.9 L3.1 -2.4 L2.6 -1.2 L2.1 -2.4 L0.9 -2.9 L2.1 -3.4 Z"/></g>
<g transform="translate(242,351.4)"><circle r="7.1" fill="url(#gblue)"/><path d="M-3.6 2 V-2.2 C-3.6 -3.3 -2.9 -4 -1.8 -4 H3.2" fill="none" stroke="#7f93f5" stroke-width="1.1"/><g fill="#dfe6f2"><rect x="-1" y="-1.1" width="2" height="2"/><rect x="2" y="-1.1" width="2" height="2"/><rect x="-1" y="1.9" width="2" height="2"/><rect x="2" y="1.9" width="2" height="2"/><rect x="-4.2" y="1.8" width="1.8" height="1"/><rect x="3" y="-4.6" width="1" height="1.6"/></g></g>
<g transform="translate(215.3,390.1)" fill="none" stroke="#7f7b92" stroke-width="1"><rect x="0" y="0" width="15.4" height="15.4" rx="4.2"/><path d="M0 5 H15.4 M4.3 5 V15.4 M9.3 5 V15.4 M4.3 9.2 H15.4"/></g>
<g transform="translate(380.3,393.3)" fill="none" stroke="#38383e" stroke-width="1.3" stroke-linecap="round" stroke-linejoin="round"><path d="M7.6 0.1 H2.7 C1 0.1 0 1.1 0 2.8 V9.6 C0 11.3 1 12.3 2.7 12.3 H9.6 C11.3 12.3 12.3 11.3 12.3 9.6 V4.9"/><path d="M11.6 -0.9 C12.1 -1.4 12.9 -1.4 13.4 -0.9 C13.9 -0.4 13.9 0.4 13.4 0.9 L6.4 7.9 L4 8.9 L4.9 6.4 Z" stroke-width="1.2"/></g>
<g transform="translate(530.9,321.8)"><rect width="14.5" height="15.2" rx="3.8" fill="url(#gpv)"/><g stroke="#efe5fd" fill="none" stroke-width="1.1"><path d="M5.6 0 V15.2 M0 5.6 H14.5"/></g></g>
<g transform="translate(579,351.9)"><circle r="7" fill="#fff"/><defs></defs><path d="M-4.1 -3.6 H0.6 C1 -3.6 1.3 -3.3 1.3 -2.9 V-0.4 H3.3 C3.8 -0.4 4.1 -0.1 4.1 0.4 V4.3 H-4.1 Z" fill="url(#gacct)"/><g fill="#fff"><rect x="-2.9" y="-2.7" width="1.1" height="1.1"/><rect x="-1" y="-2.7" width="1.1" height="1.1"/><rect x="-2.9" y="-0.3" width="1.1" height="1.1"/><rect x="-1" y="-0.3" width="1.1" height="1.1"/><rect x="-2.4" y="2.4" width="1.6" height="1.3"/><rect x="1.8" y="1" width="1.1" height="1.1"/><rect x="1.6" y="2.6" width="1.4" height="1.1"/></g></g>
<g transform="translate(690.5,390.1)" fill="none" stroke="#4b4660" stroke-width="1.15"><rect x="0" y="0" width="15.4" height="15.4" rx="4.4"/><path d="M5.1 0 V15.4 M0 5.2 H15.4"/></g>
<g transform="translate(850.3,393.3)" fill="none" stroke="#38383e" stroke-width="1.3" stroke-linecap="round" stroke-linejoin="round"><path d="M7.6 0.1 H2.7 C1 0.1 0 1.1 0 2.8 V9.6 C0 11.3 1 12.3 2.7 12.3 H9.6 C11.3 12.3 12.3 11.3 12.3 9.6 V4.9"/><path d="M11.6 -0.9 C12.1 -1.4 12.9 -1.4 13.4 -0.9 C13.9 -0.4 13.9 0.4 13.4 0.9 L6.4 7.9 L4 8.9 L4.9 6.4 Z" stroke-width="1.2"/></g>
<g transform="translate(60.9,492.8)"><rect width="14.5" height="15.2" rx="3.6" fill="url(#gpv)"/><g stroke="#efe5fd" stroke-opacity=".8" fill="none"><path d="M0 5.3 H14.5" stroke-width="1.2"/><path d="M3.6 5.3 V15.2 M9 5.3 V15.2 M3.6 9.7 H14.5" stroke-width="1"/></g></g>
<g transform="translate(108.9,522.4)"><circle r="7.1" fill="url(#gpv2)"/><g stroke="#fff" stroke-width="0.95" stroke-linecap="round" fill="none"><path d="M-2.6 -4 V3 M-0.5 -4 V1.3 M1.5 -4 V1.3 M3.6 -4 V1.3"/><path d="M-4.2 1.8 L-2.6 3.4 L-1 1.8" stroke-width="0.9"/></g></g>
<g transform="translate(126.9,522.4)"><circle r="7.1" fill="url(#gpink)"/><g stroke="#fff" fill="none" stroke-linecap="butt"><path d="M-4 -2.9 H2.8" stroke-width="1"/><path d="M-4 -0.3 H0.8" stroke-width="1.5" stroke-opacity=".8"/><path d="M-4 2 H0.8 M-4 4 H0.8" stroke-width="1"/></g><path fill="#fff" d="M2.6 -4.6 L3.1 -3.4 L4.3 -2.9 L3.1 -2.4 L2.6 -1.2 L2.1 -2.4 L0.9 -2.9 L2.1 -3.4 Z"/></g>
<g transform="translate(144.9,522.4)"><circle r="7.1" fill="url(#gblue)"/><path d="M-3.6 2 V-2.2 C-3.6 -3.3 -2.9 -4 -1.8 -4 H3.2" fill="none" stroke="#7f93f5" stroke-width="1.1"/><g fill="#dfe6f2"><rect x="-1" y="-1.1" width="2" height="2"/><rect x="2" y="-1.1" width="2" height="2"/><rect x="-1" y="1.9" width="2" height="2"/><rect x="2" y="1.9" width="2" height="2"/><rect x="-4.2" y="1.8" width="1.8" height="1"/><rect x="3" y="-4.6" width="1" height="1.6"/></g></g>
<g transform="translate(215.3,561.1)" fill="none" stroke="#7f7b92" stroke-width="1"><rect x="0" y="0" width="15.4" height="15.4" rx="4.2"/><path d="M0 5 H15.4 M4.3 5 V15.4 M9.3 5 V15.4 M4.3 9.2 H15.4"/></g>
<g transform="translate(380.3,564.3)" fill="none" stroke="#38383e" stroke-width="1.3" stroke-linecap="round" stroke-linejoin="round"><path d="M7.6 0.1 H2.7 C1 0.1 0 1.1 0 2.8 V9.6 C0 11.3 1 12.3 2.7 12.3 H9.6 C11.3 12.3 12.3 11.3 12.3 9.6 V4.9"/><path d="M11.6 -0.9 C12.1 -1.4 12.9 -1.4 13.4 -0.9 C13.9 -0.4 13.9 0.4 13.4 0.9 L6.4 7.9 L4 8.9 L4.9 6.4 Z" stroke-width="1.2"/></g>
<g transform="translate(530.9,492.8)"><rect width="14.5" height="15.2" rx="3.8" fill="url(#gpv)"/><g stroke="#efe5fd" fill="none" stroke-width="1.1"><path d="M5.6 0 V15.2 M0 5.6 H14.5"/></g></g>
<g transform="translate(579,522.7)"><circle r="7" fill="#fff"/><rect x="-4.1" y="-3.2" width="8.2" height="6.3" rx="1.3" fill="url(#gcont)"/><path fill="#fff" d="M-2.2 -2.2 C-1.5 -2.2 -1 -1.7 -1 -1 C-1 -0.4 -1.3 0 -1.6 0.3 C-0.6 0.6 -0.2 1.2 -0.2 2 H-4.1 C-4.1 1.2 -3.7 0.6 -2.8 0.3 C-3.1 0 -3.4 -0.4 -3.4 -1 C-3.4 -1.7 -2.9 -2.2 -2.2 -2.2 Z" transform="translate(0.3,0)"/><rect x="0.9" y="-2" width="2.4" height="3.4" rx="0.8" fill="#e88af5" fill-opacity=".75"/></g>
<g transform="translate(690.5,561.1)" fill="none" stroke="#4b4660" stroke-width="1.15"><rect x="0" y="0" width="15.4" height="15.4" rx="4.4"/><path d="M5.1 0 V15.4 M0 5.2 H15.4"/></g>
<g transform="translate(850.3,564.3)" fill="none" stroke="#38383e" stroke-width="1.3" stroke-linecap="round" stroke-linejoin="round"><path d="M7.6 0.1 H2.7 C1 0.1 0 1.1 0 2.8 V9.6 C0 11.3 1 12.3 2.7 12.3 H9.6 C11.3 12.3 12.3 11.3 12.3 9.6 V4.9"/><path d="M11.6 -0.9 C12.1 -1.4 12.9 -1.4 13.4 -0.9 C13.9 -0.4 13.9 0.4 13.4 0.9 L6.4 7.9 L4 8.9 L4.9 6.4 Z" stroke-width="1.2"/></g>
<!--MAINICONS-END-->
</svg>

<div id="side" class="abs"></div>
<div id="sb" class="abs"><div id="sbthumb" class="abs"></div></div>
<svg class="abs" style="left:0;top:0" width="1280" height="753" viewBox="0 0 1280 753">
<g fill="#fff"><path d="M1247.9 394.2 H1252.8 L1256.1 400.4 H1252.1 Z"/><path d="M1259.4 394.2 H1264.4 L1256.5 407.2 L1256.1 400.4 Z"/></g>
<path d="M1271 8.6 L1275.6 2 L1280.2 8.6 Z" fill="#8b8a8d" stroke="#8b8a8d" stroke-width="0.8" stroke-linejoin="round"/>
<path d="M1271 741.6 L1275.6 748.2 L1280.2 741.6 Z" fill="#8b8a8d" stroke="#8b8a8d" stroke-width="0.8" stroke-linejoin="round"/>
<path d="M324.4 415.3 V431.5 L328.4 428.2 L330.9 433.6 L333.5 432.6 L331.2 427.4 H336.4 Z" fill="#fff" stroke="#111" stroke-width="1.05" stroke-linejoin="miter"/>
</svg>
</body>
</html>
